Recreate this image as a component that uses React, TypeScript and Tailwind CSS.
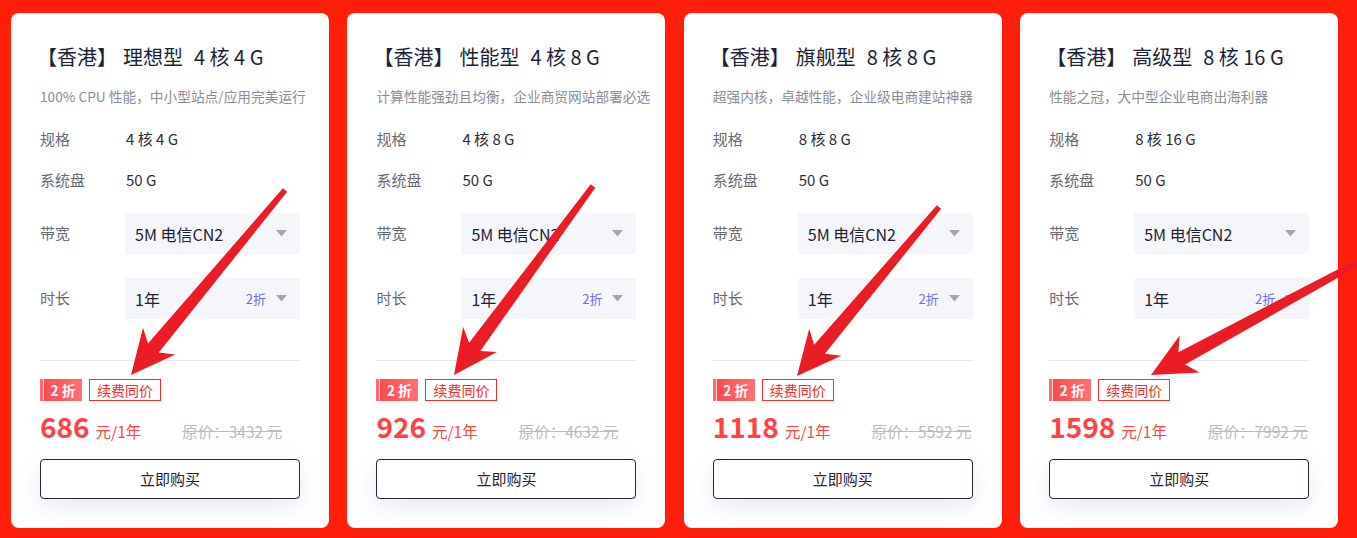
import React from "react";

type Plan = {
  name: string;
  desc: string;
  spec: string;
  price: string;
  origin: string;
};

const plans: Plan[] = [
  {
    name: "理想型",
    desc: "100% CPU 性能，中小型站点/应用完美运行",
    spec: "4 核 4 G",
    price: "686",
    origin: "3432",
  },
  {
    name: "性能型",
    desc: "计算性能强劲且均衡，企业商贸网站部署必选",
    spec: "4 核 8 G",
    price: "926",
    origin: "4632",
  },
  {
    name: "旗舰型",
    desc: "超强内核，卓越性能，企业级电商建站神器",
    spec: "8 核 8 G",
    price: "1118",
    origin: "5592",
  },
  {
    name: "高级型",
    desc: "性能之冠，大中型企业电商出海利器",
    spec: "8 核 16 G",
    price: "1598",
    origin: "7992",
  },
];

// annotation arrows: [tailX, tailY, tipX, tipY]
const arrows: [number, number, number, number][] = [
  [285, 190, 131, 375],
  [593, 186, 454, 375],
  [939, 207, 797, 376],
  [1385, 248, 1151, 375],
];

function arrowPoints(x1: number, y1: number, x2: number, y2: number) {
  const dx = x1 - x2;
  const dy = y1 - y2;
  const len = Math.hypot(dx, dy);
  const ux = dx / len;
  const uy = dy / len;
  const nx = -uy;
  const ny = ux;
  const pts: [number, number][] = [
    [0, 0],
    [44, 21],
    [35, 7],
    [len, 2.8],
    [len, -2.8],
    [35, -7],
    [44, -21],
  ];
  return pts
    .map(([t, s]) => `${x2 + ux * t + nx * s},${y2 + uy * t + ny * s}`)
    .join(" ");
}

function Caret() {
  return (
    <svg width="11" height="7" viewBox="0 0 11 7" className="shrink-0">
      <path d="M0 0 L11 0 L5.5 6.5 Z" fill="#a3a6ad" />
    </svg>
  );
}

function PlanCard({ plan }: { plan: Plan }) {
  return (
    <div className="w-[318px] h-[515px] shrink-0 bg-white rounded-[8px] px-[29px] pt-[30px]">
      <h3 className="text-[20px] leading-[28px] text-[#1c1f3a] whitespace-nowrap">
        <span className="-ml-[3px]">【香港】</span>
        <span className="ml-[6px]">{plan.name}</span>
        <span className="ml-[11px]">{plan.spec}</span>
      </h3>

      <p className="mt-[15px] text-[13.7px] leading-[20px] text-[#8a8d96] whitespace-nowrap">
        {plan.desc}
      </p>

      <div className="mt-[23px] flex items-center text-[15px] leading-[20px]">
        <span className="w-[86px] text-[#666a73]">规格</span>
        <span className="text-[#2a2d3a]">{plan.spec}</span>
      </div>

      <div className="mt-[21px] flex items-center text-[15px] leading-[20px]">
        <span className="w-[86px] text-[#666a73]">系统盘</span>
        <span className="text-[#2a2d3a]">50 G</span>
      </div>

      <div className="mt-[23px] flex items-center">
        <span className="w-[85px] text-[15px] text-[#666a73]">带宽</span>
        <div className="flex-1 h-[41px] bg-[#f5f6fa] flex items-center pl-[10px] pr-[13px]">
          <span className="flex-1 text-[16px] text-[#1f2230]">5M 电信CN2</span>
          <Caret />
        </div>
      </div>

      <div className="mt-[24px] flex items-center">
        <span className="w-[85px] text-[15px] text-[#666a73]">时长</span>
        <div className="flex-1 h-[41px] bg-[#f5f6fa] flex items-center pl-[10px] pr-[13px]">
          <span className="flex-1 text-[16px] text-[#1f2230]">1年</span>
          <span className="text-[13px] text-[#6f6cf0] mr-[10px]">2折</span>
          <Caret />
        </div>
      </div>

      <div className="mt-[41px] h-px bg-[#e6e7eb]" />

      <div className="mt-[18px] flex items-center gap-[7px]">
        <div className="flex h-[22px] w-[42px]">
          <span className="w-[3px] bg-[#ff6b6f]" />
          <span className="w-px bg-[#ffd5d6]" />
          <span className="flex-1 flex items-center justify-center bg-gradient-to-r from-[#ff4a4e] to-[#ff7276] text-white text-[14px] font-bold">
            2 折
          </span>
        </div>
        <span className="h-[22px] flex items-center px-[7px] border border-[#f0302a] text-[#f0302a] text-[14px]">
          续费同价
        </span>
      </div>

      <div className="mt-[9px] flex items-baseline h-[32px]">
        <span className="text-[28px] leading-[32px] font-bold text-[#ff4343]">
          {plan.price}
        </span>
        <span className="ml-[6px] text-[15.5px] text-[#ff4343]">元/1年</span>
        <span className="ml-[41px] text-[15.5px] text-[#b9bbc1] line-through">
          原价：{plan.origin} 元
        </span>
      </div>

      <button
        type="button"
        className="mt-[17px] w-full h-[40px] rounded-[4px] border border-[#23252f] bg-white text-[15px] text-[#1f2230] shadow-[0_8px_24px_rgba(120,140,190,0.18)]"
      >
        立即购买
      </button>
    </div>
  );
}

export default function App() {
  return (
    <div
      className="relative w-[1357px] h-[538px] overflow-hidden bg-[#ff1f0a] pt-[13px] pl-[11px]"
      style={{ fontFamily: '"Noto Sans CJK SC", "Noto Sans", sans-serif' }}
    >
      <div className="flex gap-[18.4px]">
        {plans.map((plan) => (
          <PlanCard key={plan.name} plan={plan} />
        ))}
      </div>

      <svg
        className="absolute inset-0 pointer-events-none"
        width="1357"
        height="538"
        viewBox="0 0 1357 538"
      >
        {arrows.map(([x1, y1, x2, y2], i) => (
          <polygon
            key={i}
            points={arrowPoints(x1, y1, x2, y2)}
            fill="#ec1c27"
          />
        ))}
      </svg>
    </div>
  );
}
